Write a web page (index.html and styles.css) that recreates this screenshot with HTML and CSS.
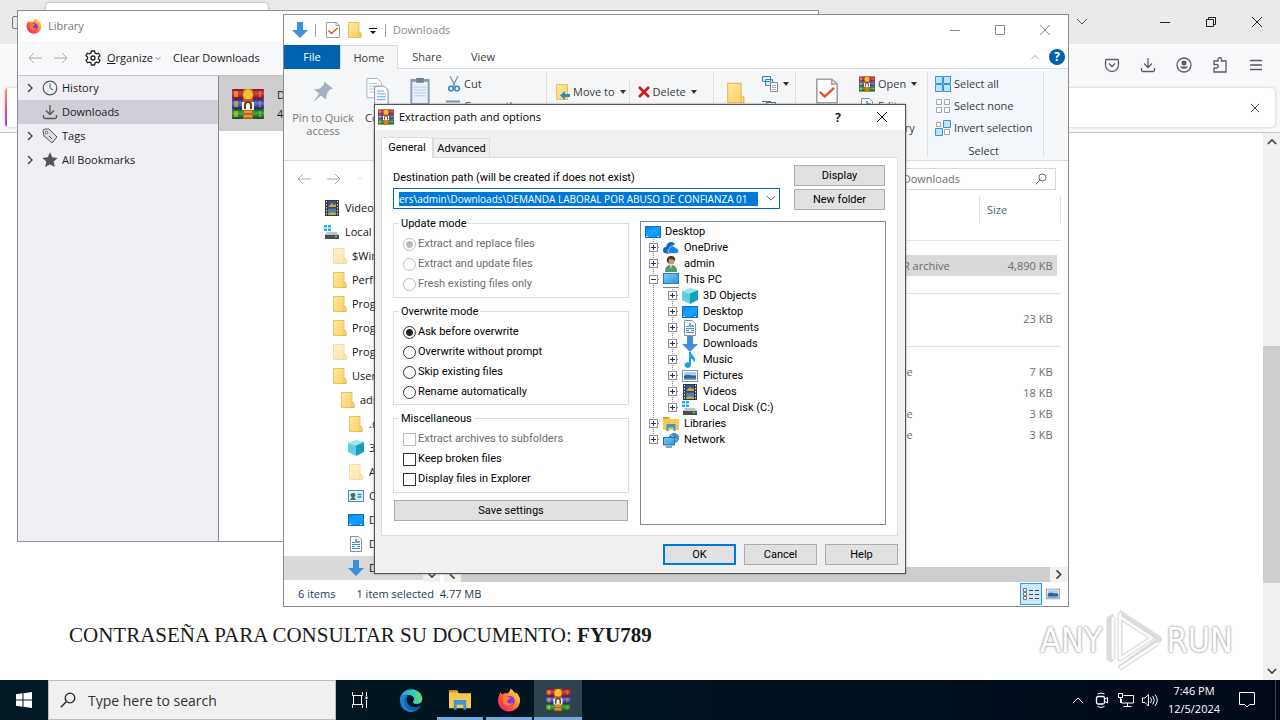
FILE: index.html
```html
<!DOCTYPE html>
<html lang="en">
<head>
<meta charset="utf-8">
<title>Desktop</title>
<link rel="stylesheet" href="styles.css">
</head>
<body>
<svg class="defs" aria-hidden="true">
  <defs>
    <linearGradient id="gRed" x2="0" y2="1"><stop offset="0" stop-color="#7e1620"/><stop offset=".4" stop-color="#e0434a"/><stop offset="1" stop-color="#7c1019"/></linearGradient>
    <linearGradient id="gBlue" x2="0" y2="1"><stop offset="0" stop-color="#262a80"/><stop offset=".4" stop-color="#6c6fd4"/><stop offset="1" stop-color="#22246b"/></linearGradient>
    <linearGradient id="gGreen" x2="0" y2="1"><stop offset="0" stop-color="#0e5a20"/><stop offset=".4" stop-color="#3fae4b"/><stop offset="1" stop-color="#0b4a19"/></linearGradient>
    <linearGradient id="gFolder" x2="1" y2="1"><stop offset="0" stop-color="#ffe9a0"/><stop offset="1" stop-color="#f8cf63"/></linearGradient>
    <linearGradient id="gScreen" x2="1" y2="1"><stop offset="0" stop-color="#0a84f0"/><stop offset=".5" stop-color="#19a4ff"/><stop offset="1" stop-color="#0a84f0"/></linearGradient>
    <linearGradient id="gPc" x2="1" y2="1"><stop offset="0" stop-color="#7fd0fb"/><stop offset="1" stop-color="#2a94dd"/></linearGradient>
    <linearGradient id="gFox" x1="1" x2="0" y2="1"><stop offset="0" stop-color="#fff24a"/><stop offset=".35" stop-color="#ffa02a"/><stop offset=".65" stop-color="#ff4a3f"/><stop offset="1" stop-color="#e61b86"/></linearGradient>
    <linearGradient id="gEdge" x2="1" y2="0"><stop offset="0" stop-color="#1b9de0"/><stop offset=".6" stop-color="#38c8c0"/><stop offset="1" stop-color="#6be05a"/></linearGradient>
    <linearGradient id="gEdge2" x2="1" y2="1"><stop offset="0" stop-color="#1b74d0"/><stop offset="1" stop-color="#0d4c9c"/></linearGradient>
  </defs>
  <symbol id="winrar" viewBox="0 0 32 32">
    <rect x="0" y="1" width="32" height="10" rx="1" fill="url(#gRed)"/><rect x="0" y="11" width="32" height="10" rx="1" fill="url(#gBlue)"/><rect x="0" y="21" width="32" height="10" rx="1" fill="url(#gGreen)"/>
    <path d="M3 3v6M5 3v6M3 13v6M5 13v6M3 23v6M5 23v6" stroke="#e9c13c" stroke-width="1.2"/>
    <path d="M28 3v6M28 13v6M28 23v6" stroke="#d5a93a" stroke-width="1"/>
    <rect x="11" y="1" width="10" height="30" fill="#b8631e"/><path d="M12 5h8M12 9h8M12 24h8M12 28h8" stroke="#e89b3c" stroke-width="2"/>
    <path d="M11 8c0-9 10-9 10 0l-2 3h-6z" fill="#f6c330"/><rect x="10" y="14" width="12" height="8" fill="#f7f4ee"/><path d="M13 21v-4a3 3 0 0 1 6 0v4" fill="none" stroke="#6a3b1c" stroke-width="2"/>
  </symbol>
  <symbol id="folder" viewBox="0 0 14 16"><path d="M.5.5h10.5v10l2 1v4H.5z" fill="url(#gFolder)" stroke="#e9c05c"/><path d="M11 15.500v-3.500q0-1.500 1-1.500t1 1.500v3.500z" fill="#fbe08a" stroke="#dcae45" stroke-width=".7"/></symbol>
  <symbol id="arrow" viewBox="0 0 16 16"><path d="M5 0h6v8h5l-8 8-8-8h5z" fill="#3c8fdb"/></symbol>
  <symbol id="desktop" viewBox="0 0 16 12"><rect width="16" height="12" fill="#0a6fce"/><rect x="1" y="1" width="14" height="10" fill="url(#gScreen)"/><path d="M1 10.500h2M12 10.500h2" stroke="#bfe3ff"/></symbol>
  <symbol id="doc" viewBox="0 0 16 16"><path d="M2.500.5h8l3 3v12h-11z" fill="#fff" stroke="#8a9299"/><path d="M4 6.500h3M4 8.500h8M4 10.500h3M9 10.500h3M4 12.500h8" stroke="#3c8fc9"/><path d="M8 3v3h4" fill="none" stroke="#3c8fc9" stroke-width="1.500"/></symbol>
  <symbol id="video" viewBox="0 0 16 16"><rect x="1" width="14" height="16" fill="#33383d"/><rect x="4" y="1" width="8" height="6.500" fill="#35568c"/><rect x="4" y="8.500" width="8" height="6.500" fill="#4b7fb8"/><path d="M4 7l4-4 2 2 2-1v3zM4 14l3-2 5 1v2H4z" fill="#cfa23c"/><path d="M2.500 1v14M13.500 1v14" stroke="#dfe3e6" stroke-dasharray="1.500 1.500"/></symbol>
  <symbol id="disk" viewBox="0 0 16 16"><path d="M0 1h3v2.500H0zM4 1h3v2.500H4zM0 4.500h3V7H0zM4 4.500h3V7H4z" fill="#22b1ea"/><path d="M3 8h10l2 3H1z" fill="#c2c6c9"/><path d="M1 11h14v4H1z" fill="#4a4f53"/><path d="M11 12.500h2" stroke="#5de06a" stroke-width="1.500"/></symbol>
  <symbol id="cube" viewBox="0 0 16 16"><path d="M0 3l8-3 8 2-8 3.500z" fill="#9be5ee"/><path d="M0 3l8 2.500V16l-8-4z" fill="#5fd0df"/><path d="M8 5.500L16 2v10l-8 4z" fill="#14a0bd"/></symbol>
  <symbol id="card" viewBox="0 0 16 12"><rect x=".5" y=".5" width="15" height="11" fill="#d8effc" stroke="#5a8fb5"/><path d="M5 3a2 2 0 0 1 1 4l2 3H2l2-3a2 2 0 0 1 1-4z" fill="#3d7560"/><path d="M9.500 4.500h4M9.500 7h4" stroke="#2d86c4" stroke-width="1.500"/></symbol>
  <symbol id="music" viewBox="0 0 16 16"><path d="M7 0h2c0 3 4 4 4 8 0 1-.5 2-1 2.500C12 8 10 7 9 6.500V13a3.200 2.800 0 1 1-2-2.500z" fill="#16a0ee"/></symbol>
  <symbol id="picture" viewBox="0 0 16 12"><rect x=".5" y=".5" width="15" height="11" fill="#fff" stroke="#8d969e"/><rect x="2" y="2" width="12" height="8" fill="#9fd2f5"/><path d="M2 6c4-3 6 0 12-.5V10H2z" fill="#31618e"/><path d="M2 8.500h12V10H2z" fill="#79aede"/></symbol>
  <symbol id="cloud" viewBox="0 0 16 12"><path d="M0 8a3 3 0 0 1 3-3C4 0 9-1.500 12 2L6 7l2 4.500H3A3.200 3.200 0 0 1 0 8z" fill="#0f6cc4"/><path d="M7 11.500a2.700 2.700 0 0 1-.500-5C7 3.500 11.500 3 12.500 6a2.800 2.800 0 0 1 1 5.500z" fill="#1b86e0" stroke="#fff" stroke-width=".6"/></symbol>
  <symbol id="user" viewBox="0 0 16 16"><path d="M2 16c0-5 2-7 6-7s6 2 6 7z" fill="#4f9a6b"/><circle cx="8" cy="5" r="3.600" fill="#c89872"/><path d="M4 6c-2-8 10-8 8-1-1-2-4-1-5-2.500C6 4 5.500 5 5.500 7z" fill="#4c392e"/><path d="M7 9l1 4 1-4z" fill="#e8efe9"/></symbol>
  <symbol id="pc" viewBox="0 0 16 16"><rect x=".5" y="1.500" width="15" height="10" fill="url(#gPc)" stroke="#2a78b0"/><path d="M0 15.500h16" stroke="#6f8595"/></symbol>
  <symbol id="library" viewBox="0 0 16 16"><path d="M0 1h6l1 2h9v11H0z" fill="#f8c94c"/><path d="M0 1h6l1 1.500H0z" fill="#d99b22"/><path d="M3.500 15V8h9v7h-2v-3.500h-5V15z" fill="#3d94d8"/></symbol>
  <symbol id="network" viewBox="0 0 16 16"><circle cx="11" cy="6" r="5" fill="#3b8fc4"/><path d="M8 3c2 1 3 4 6 5" stroke="#9bd7f2" fill="none"/><rect x=".5" y="5.500" width="11" height="7.500" fill="url(#gPc)" stroke="#2a6f9f"/><path d="M3 15h6" stroke="#4292c0" stroke-width="1.500"/></symbol>
  <symbol id="firefox" viewBox="0 0 24 24"><path d="M12 23.500A11 11 0 0 1 1.500 9C2.500 6 3 5 4 4c0 1 .3 2 1 2.500C7 5 9 5 10 5.500c2-1 3-2 3.500-5 3 2 4 4 5 5l.8-1c3 3 4.200 6 3.700 9.500A11 11 0 0 1 12 23.500z" fill="url(#gFox)"/><circle cx="12.500" cy="13" r="5.300" fill="#7a3be0"/><path d="M6 9c3-2 6 0 8 1-2 .5-2 2-4 2.500 0 3 4 4 6.500 2-1.500 4-8 5-10.500 0-.8-2-.6-4 0-5.500z" fill="#ff7a2e"/></symbol>
  <symbol id="edge" viewBox="0 0 24 24"><path d="M1 10C3 1 15-2 21 5c4 5 2.500 11-3 11-3 0-4-1-4-2 0-.8 1-1 1-3 0-3-3-4-5-4-5 0-9 3-9 6z" fill="url(#gEdge)"/><path d="M1 12c0-5 5-6 8-4-4 2-5 9 0 12 4 3 9 2 13-2-3 5-9 7-13 5.500C4 22 1 18 1 12z" fill="#1a82d8"/><path d="M9 8c-2 2-2 7 2 10 4 2 8 1 11-.5-5 7.500-13 5.500-15 1.500-2.500-5-.5-9 2-11z" fill="url(#gEdge2)"/></symbol>
  <symbol id="back" viewBox="0 0 14 12"><path d="M14 6H1M6 1L1 6l5 5" fill="none" stroke="currentColor"/></symbol>
  <symbol id="fwd" viewBox="0 0 14 12"><path d="M0 6h13M8 1l5 5-5 5" fill="none" stroke="currentColor"/></symbol>
  <symbol id="down" viewBox="0 0 12 8"><path d="M1 1l5 5 5-5" fill="none" stroke="currentColor"/></symbol>
  <symbol id="up" viewBox="0 0 12 8"><path d="M1 7l5-5 5 5" fill="none" stroke="currentColor"/></symbol>
  <symbol id="right" viewBox="0 0 8 12"><path d="M2 2l4 4-4 4" fill="none" stroke="currentColor" stroke-width="1.400"/></symbol>
  <symbol id="x" viewBox="0 0 12 12"><path d="M1 1l10 10M11 1L1 11" fill="none" stroke="currentColor"/></symbol>
  <symbol id="max" viewBox="0 0 12 12"><path d="M1.500 1.500h9v9h-9z" fill="none" stroke="currentColor"/></symbol>
  <symbol id="min" viewBox="0 0 12 12"><path d="M1 6.500h10" stroke="currentColor"/></symbol>
  <symbol id="restore" viewBox="0 0 12 12"><path d="M1.500 3.500h7v7h-7zM3.500 3.500v-2h7v7h-2" fill="none" stroke="currentColor"/></symbol>
  <symbol id="save" viewBox="0 0 16 16"><path d="M8 1v9M4 6.500l4 4 4-4M1.500 11v2a1.500 1.500 0 0 0 1.500 1.500h10a1.500 1.500 0 0 0 1.500-1.500v-2" fill="none" stroke="currentColor" stroke-width="1.300"/></symbol>
  <symbol id="lens" viewBox="0 0 16 16"><circle cx="10" cy="6" r="4.800" fill="none" stroke="currentColor" stroke-width="1.300"/><path d="M6.500 9.500L.8 15.200" stroke="currentColor" stroke-width="1.300"/></symbol>
  <symbol id="check" viewBox="0 0 14 16"><path d="M.5.5h9.500l3.500 3v12H.5z" fill="#fff" stroke="#a0a0a0"/><path d="M10 .5v3h3.500" fill="none" stroke="#a0a0a0"/><path d="M2.500 8.500l3 3 6-5.500" fill="none" stroke="#e0532c" stroke-width="1.500"/></symbol>
  <symbol id="copy" viewBox="0 0 24 28"><path d="M.5.5h11l4 4v16H.5z" fill="#fff" stroke="#a7b0ba"/><path d="M3 5.500h8M3 8.500h10M3 11.500h10M3 14.500h5" stroke="#9cc0e8"/><path d="M8.500 8.500h10l4 4v15h-14z" fill="#fff" stroke="#7f8fa0"/><path d="M11 13.500h7M11 16.500h9M11 19.500h9M11 22.500h9" stroke="#5a9be0"/></symbol>
  <symbol id="paste" viewBox="0 0 20 28"><rect y="2" width="20" height="26" fill="#8e9db4"/><rect x="2" y="5" width="16" height="22" fill="#eaf0f9"/><path d="M6 1h8v5H6z" fill="#6f7f96"/><path d="M4 10.500h12M4 13.500h12M4 16.500h12M4 19.500h12" stroke="#b9c9e0"/></symbol>
  <symbol id="pin" viewBox="0 0 22 22"><path d="M12 1l9 7-3 1-3 4-1 6-5-4-8 7 6-9-5-4 6-1 4-4z" fill="#a5b2c2"/></symbol>
  <symbol id="cut" viewBox="0 0 12 16"><path d="M2 0l5 10M10 0L5 10" stroke="#8a98a6" stroke-width="1.400"/><circle cx="3" cy="12.500" r="2.300" fill="none" stroke="#2c8bd0" stroke-width="1.600"/><circle cx="9" cy="12.500" r="2.300" fill="none" stroke="#2c8bd0" stroke-width="1.600"/></symbol>
  <symbol id="move" viewBox="0 0 14 16"><path d="M.5.5h11v15H.5z" fill="url(#gFolder)" stroke="#e9c05c"/><path d="M14 10H9V7l-5 4.500L9 16v-3h5z" fill="#3486cf"/></symbol>
  <symbol id="copies" viewBox="0 0 16 16"><path d="M.5.5h8v5h-8zM3.500 3.500h7v6h-7z" fill="#dceefa" stroke="#3a86a8"/><path d="M8.500 6.500h7v9h-7z" fill="#fff" stroke="#858d94"/><path d="M10 9.500h4M10 11.500h4M10 13.500h4" stroke="#a5adb4"/></symbol>
</svg>

<main class="desktop">
  <section class="browser" aria-label="Browser">
    <div class="tabstrip">
      <span class="view-icon"></span><span class="tab"></span>
      <div class="wincontrols">
        <svg class="s12 tablist"><use href="#down"/></svg>
        <svg class="s12"><use href="#min"/></svg><svg class="s12"><use href="#restore"/></svg><svg class="s12"><use href="#x"/></svg>
      </div>
    </div>
    <div class="toolbar">
      <svg class="s16" viewBox="0 0 16 16"><path d="M2.500 2.500h11q1 0 1 1V8a6.500 6.500 0 0 1-13 0V3.500q0-1 1-1zM5 6.500l3 3 3-3" fill="none" stroke="currentColor" stroke-width="1.300"/></svg>
      <svg class="s16"><use href="#save"/></svg>
      <svg class="s16" viewBox="0 0 16 16"><circle cx="8" cy="8" r="7" fill="none" stroke="currentColor" stroke-width="1.300"/><circle cx="8" cy="6" r="2.500" fill="currentColor"/><path d="M3.800 9.500h8.400a5 5 0 0 1-8.400 0z" fill="currentColor"/></svg>
      <svg class="s16" viewBox="0 0 16 16"><path d="M2 15V11h2.500a1.700 1.700 0 0 0 0-3.500H2V4h4V2.500a1.700 1.700 0 0 1 3.500 0V4H14v11z" fill="none" stroke="currentColor" stroke-width="1.300"/></svg>
      <svg class="s16" viewBox="0 0 16 16"><path d="M2 3.500h12M2 8h12M2 12.500h12" stroke="currentColor" stroke-width="1.300"/></svg>
    </div>
    <div class="notice"><div class="notice-box"><svg class="s10"><use href="#x"/></svg></div></div>
    <div class="viewport">
      <article class="page"><p>CONTRASEÑA PARA CONSULTAR SU DOCUMENTO: <strong>FYU789</strong></p></article>
      <div class="vscroll"><svg class="arrow"><use href="#up"/></svg><span class="thumb"></span><svg class="arrow"><use href="#down"/></svg></div>
    </div>
  </section>

  <section class="window library" aria-label="Library">
    <header class="lib-title"><svg class="s16"><use href="#firefox"/></svg>Library</header>
    <div class="lib-tools">
      <svg class="nav"><use href="#back"/></svg><svg class="nav"><use href="#fwd"/></svg>
      <svg class="s16 gear" viewBox="0 0 16 16"><path d="M6.500 1h3l.5 2 1.500.8 2-.6 1.500 2.600L13.500 7v2l1.500 1.300-1.500 2.500-2-.6-1.500.8-.5 2h-3L6 13l-1.500-.8-2 .6L1 10.200 2.500 9V7L1 5.700l1.500-2.500 2 .6L6 3z" fill="none" stroke="#222" stroke-width="1.300"/><circle cx="8" cy="8" r="2" fill="none" stroke="#222" stroke-width="1.300"/></svg>
      <button class="flat"><span><u>O</u>rganize</span><svg class="tiny"><use href="#down"/></svg></button>
      <button class="flat clear">Clear Downloads</button>
    </div>
    <div class="lib-body">
      <ul class="lib-side">
        <li><svg class="chev"><use href="#right"/></svg><svg class="s16" viewBox="0 0 16 16"><circle cx="8" cy="8" r="6.800" fill="none" stroke="currentColor" stroke-width="1.200"/><path d="M8 3.500V8l3 2" fill="none" stroke="currentColor"/></svg>History</li>
        <li class="on"><span class="chev"></span><svg class="s16"><use href="#save"/></svg>Downloads</li>
        <li><svg class="chev"><use href="#right"/></svg><svg class="s16" viewBox="0 0 16 16"><path d="M1 3q0-2 2-2h4l8 8-5 6-8-7z" fill="#dcdce0" stroke="currentColor"/><circle cx="4.500" cy="4.500" r="1.200" fill="#fff" stroke="currentColor"/><path d="M7 8l3 3" stroke="currentColor"/></svg>Tags</li>
        <li><svg class="chev"><use href="#right"/></svg><svg class="s16" viewBox="0 0 16 16"><path d="M8 .3l2.300 5 5.400.6-4 3.700 1.100 5.500L8 12.400l-4.800 2.700 1.100-5.500-4-3.700 5.400-.6z" fill="currentColor"/></svg>All Bookmarks</li>
      </ul>
      <div class="lib-list"><div class="lib-item"><svg class="s32"><use href="#winrar"/></svg><div>D<br>4</div></div></div>
    </div>
  </section>

  <section class="window explorer" aria-label="Downloads">
    <header class="ex-title">
      <svg class="s16"><use href="#arrow"/></svg><i class="bar"></i><svg class="f16 qcheck"><use href="#check"/></svg><svg class="f16 qfolder"><use href="#folder"/></svg>
      <svg class="qdrop" viewBox="0 0 8 8"><path d="M0 1.500h8" stroke="#111"/><path d="M1 4h6L4 7z" fill="#111"/></svg><i class="bar"></i><span class="ex-name">Downloads</span>
      <div class="ex-controls"><svg class="s12"><use href="#min"/></svg><svg class="s12"><use href="#max"/></svg><svg class="s12"><use href="#x"/></svg></div>
    </header>
    <nav class="ex-tabs"><button class="file">File</button><button class="home">Home</button><button>Share</button><button>View</button>
      <div class="ex-help"><svg class="ucar"><use href="#up"/></svg><button class="help">?</button></div></nav>
    <div class="ribbon">
      <div class="group clip">
        <button class="big pinbtn"><svg class="pin"><use href="#pin"/></svg><span>Pin to Quick<br>access</span></button>
        <button class="big"><svg class="copy"><use href="#copy"/></svg><span>Copy</span></button>
        <button class="big paste"><svg class="copy"><use href="#paste"/></svg></button>
        <div class="stack"><button><svg class="s16"><use href="#cut"/></svg>Cut</button><button><svg class="s16" viewBox="0 0 16 16"><path d="M0 3.500h14" stroke="#7895b0" stroke-width="2"/></svg>Copy path</button></div>
      </div>
      <div class="group org"><button><svg class="f16"><use href="#move"/></svg>Move to<i class="tri"></i></button><i class="split"></i><button class="delete"><svg class="s12" viewBox="0 0 12 12"><path d="M1 1l10 10M11 1L1 11" stroke="#d3161b" stroke-width="2.600"/></svg>Delete<i class="tri"></i></button></div>
      <div class="group new"><svg class="newf"><use href="#folder"/></svg><div class="stack"><button><svg class="s16"><use href="#copies"/></svg><i class="tri"></i></button><button><svg class="s16" viewBox="0 0 16 16"><path d="M4.500 4.500h9v8h-9zM0 3.500h9M2 6.500h5" fill="none" stroke="#4a6f90"/></svg><i class="tri"></i></button></div></div>
      <div class="group open"><svg class="prop"><use href="#check"/></svg><div class="stack"><button><svg class="s16"><use href="#winrar"/></svg>Open<i class="tri"></i></button><button><svg class="s16"><use href="#doc"/></svg>Edit</button><button><svg class="s16"><use href="#doc"/></svg>History</button></div></div>
      <div class="group select"><div class="stack">
        <button><svg class="s16" viewBox="0 0 16 16"><path d="M.5.5h7v7h-7zM8.500.5h7v7h-7zM.5 8.500h7v7h-7zM8.500 8.500h7v7h-7z" fill="#bfe2fb" stroke="#3b94d6"/></svg>Select all</button>
        <button><svg class="s16" viewBox="0 0 16 16"><path d="M1.500 1.500h5v5h-5zM9.500 1.500h5v5h-5zM1.500 9.500h5v5h-5zM9.500 9.500h5v5h-5z" fill="#fff" stroke="#a5a5a5"/></svg>Select none</button>
        <button><svg class="s16" viewBox="0 0 16 16"><path d="M1.500 2.500h4v4h-4zM9.500 9.500h5v5h-5z" fill="#fff" stroke="#a5a5a5"/><path d="M8.500.5h7v7h-7zM.5 8.500h7v7h-7z" fill="#bfe2fb" stroke="#3b94d6"/></svg>Invert selection</button>
        <span class="glabel">Select</span></div></div>
    </div>
    <div class="address"><svg class="nav"><use href="#back"/></svg><svg class="nav"><use href="#fwd"/></svg><svg class="tiny"><use href="#down"/></svg><svg class="tiny dark"><use href="#up"/></svg>
      <div class="searchbox"><input aria-label="Search" placeholder="Search Downloads"><svg class="s12"><use href="#lens"/></svg></div></div>
    <div class="ex-body">
      <div class="navpane">
        <ul>
          <li class="l1"><svg class="s16"><use href="#video"/></svg>Videos</li>
          <li class="l1"><svg class="s16"><use href="#disk"/></svg>Local Disk (C:)</li>
          <li class="l2 pale"><svg class="f16"><use href="#folder"/></svg>$WinREAgent</li>
          <li class="l2"><svg class="f16"><use href="#folder"/></svg>PerfLogs</li>
          <li class="l2"><svg class="f16"><use href="#folder"/></svg>Program Files</li>
          <li class="l2"><svg class="f16"><use href="#folder"/></svg>Program Files</li>
          <li class="l2 pale"><svg class="f16"><use href="#folder"/></svg>ProgramData</li>
          <li class="l2"><svg class="f16"><use href="#folder"/></svg>Users</li>
          <li class="l3"><svg class="f16"><use href="#folder"/></svg>admin</li>
          <li class="l4"><svg class="f16"><use href="#folder"/></svg>.ms</li>
          <li class="l4"><svg class="s16"><use href="#cube"/></svg>3D Objects</li>
          <li class="l4 pale"><svg class="f16"><use href="#folder"/></svg>AppData</li>
          <li class="l4"><svg class="s16"><use href="#card"/></svg>Contacts</li>
          <li class="l4"><svg class="s16"><use href="#desktop"/></svg>Desktop</li>
          <li class="l4"><svg class="s16"><use href="#doc"/></svg>Documents</li>
          <li class="l4 on"><svg class="s16"><use href="#arrow"/></svg>Downloads</li>
        </ul>
        <div class="navscroll"><svg class="arrow"><use href="#down"/></svg></div>
      </div>
      <div class="filepane">
        <table>
          <colgroup><col><col class="ctype"><col class="csize"><col class="cend"></colgroup>
          <thead><tr><th></th><th></th><th>Size</th><th></th></tr></thead>
          <tbody><tr class="sep"><td colspan="4"><hr></td></tr><tr class="on"><td></td><td>WinRAR archive</td><td>4,890 KB</td><td></td></tr></tbody>
          <tbody><tr class="sep"><td colspan="4"><hr></td></tr><tr><td></td><td></td><td>23 KB</td><td></td></tr></tbody>
          <tbody><tr class="sep"><td colspan="4"><hr></td></tr><tr><td></td><td>PNG File</td><td>7 KB</td><td></td></tr><tr><td></td><td></td><td>18 KB</td><td></td></tr><tr><td></td><td>PNG File</td><td>3 KB</td><td></td></tr><tr><td></td><td>PNG File</td><td>3 KB</td><td></td></tr></tbody>
        </table>
        <div class="hscroll"><svg class="arrow left"><use href="#down"/></svg><span class="thumb"></span><svg class="arrow rt"><use href="#down"/></svg></div>
      </div>
    </div>
    <footer class="status"><span>6 items</span><span>1 item selected&nbsp; 4.77 MB</span>
      <button class="viewmode on" aria-label="Details"><svg class="s16" viewBox="0 0 16 16"><path d="M.5 2.500h3v3h-3zM.5 6.500h3v3h-3zM.5 10.500h3v3h-3z" fill="#fff" stroke="#777"/><path d="M6 4.500h4M12 4.500h4M6 8.500h4M12 8.500h4M6 12.500h4M12 12.500h4" stroke="#444"/></svg></button>
      <button class="viewmode" aria-label="Large icons"><svg class="s14"><use href="#picture"/></svg></button></footer>
  </section>

  <section class="window dialog" role="dialog" aria-label="Extraction path and options">
    <header class="dg-title"><svg class="s16"><use href="#winrar"/></svg><span>Extraction path and options</span><b>?</b><svg class="s12"><use href="#x"/></svg></header>
    <form class="dg-body">
      <div class="dg-tabs" role="tablist"><button type="button" role="tab" class="on">General</button><button type="button" role="tab">Advanced</button></div>
      <div class="panel">
        <div class="toprow">
          <div class="dest"><label for="path">Destination path (will be created if does not exist)</label>
            <div class="combo"><input id="path" value="ers\admin\Downloads\DEMANDA LABORAL POR ABUSO DE CONFIANZA 01"><svg class="cdrop"><use href="#down"/></svg></div></div>
          <div class="sidebtns"><button type="button">Display</button><button type="button">New folder</button></div>
        </div>
        <div class="cols">
          <div class="leftcol">
            <fieldset disabled><legend>Update mode</legend>
              <label><input type="radio" name="u" checked>Extract and replace files</label><label><input type="radio" name="u">Extract and update files</label><label><input type="radio" name="u">Fresh existing files only</label></fieldset>
            <fieldset class="four"><legend>Overwrite mode</legend>
              <label><input type="radio" name="o" checked>Ask before overwrite</label><label><input type="radio" name="o">Overwrite without prompt</label><label><input type="radio" name="o">Skip existing files</label><label><input type="radio" name="o">Rename automatically</label></fieldset>
            <fieldset><legend>Miscellaneous</legend>
              <label class="off"><input type="checkbox" disabled>Extract archives to subfolders</label><label><input type="checkbox">Keep broken files</label><label><input type="checkbox">Display files in Explorer</label></fieldset>
            <button type="button" class="savebtn">Save settings</button>
          </div>
          <div class="tree">
            <div class="node root"><svg class="s16"><use href="#desktop"/></svg>Desktop</div>
            <ul>
              <li><div class="node"><i class="pm"></i><svg class="s16"><use href="#cloud"/></svg>OneDrive</div></li>
              <li><div class="node"><i class="pm"></i><svg class="s16"><use href="#user"/></svg>admin</div></li>
              <li><div class="node"><i class="pm minus"></i><svg class="s16"><use href="#pc"/></svg>This PC</div>
                <ul>
                  <li><div class="node"><i class="pm"></i><svg class="s16"><use href="#cube"/></svg>3D Objects</div></li>
                  <li><div class="node"><i class="pm"></i><svg class="s16"><use href="#desktop"/></svg>Desktop</div></li>
                  <li><div class="node"><i class="pm"></i><svg class="s16"><use href="#doc"/></svg>Documents</div></li>
                  <li><div class="node"><i class="pm"></i><svg class="s16"><use href="#arrow"/></svg>Downloads</div></li>
                  <li><div class="node"><i class="pm"></i><svg class="s16"><use href="#music"/></svg>Music</div></li>
                  <li><div class="node"><i class="pm"></i><svg class="s16"><use href="#picture"/></svg>Pictures</div></li>
                  <li><div class="node"><i class="pm"></i><svg class="s16"><use href="#video"/></svg>Videos</div></li>
                  <li><div class="node"><i class="pm"></i><svg class="s16"><use href="#disk"/></svg>Local Disk (C:)</div></li>
                </ul></li>
              <li><div class="node"><i class="pm"></i><svg class="s16"><use href="#library"/></svg>Libraries</div></li>
              <li><div class="node"><i class="pm"></i><svg class="s16"><use href="#network"/></svg>Network</div></li>
            </ul>
          </div>
        </div>
      </div>
      <div class="actions"><button type="button" class="ok">OK</button><button type="button">Cancel</button><button type="button">Help</button></div>
    </form>
  </section>

  <div class="mark"><span>ANY</span>
    <svg viewBox="0 0 56 64"><g fill="none" stroke-linejoin="round"><path d="M7 53L3 50V11l5-3M13 4l41 27-41 29" stroke="#dcdcdc" stroke-width="5"/><path d="M14 5v46l32-21L14 9M7 51V9M14 60l38-25" stroke="#d4d4d4" stroke-width="5"/><path d="M14 5v46l32-21L14 9M7 51V9M14 60l38-25" stroke="#fafafa" stroke-width="3"/></g></svg>
    <span>RUN</span></div>
</main>

<footer class="taskbar">
  <button class="start" aria-label="Start"><svg class="s16" viewBox="0 0 16 16"><path d="M0 2.200L6.500 1.300v6.200H0zM7.500 1.200L16 0v7.500H7.500zM0 8.500h6.500v6.200L0 13.800zM7.500 8.500H16V16l-8.500-1.200z" fill="#fff"/></svg></button>
  <div class="search"><svg class="s16"><use href="#lens"/></svg><input aria-label="Search" placeholder="Type here to search"></div>
  <button class="app" aria-label="Task view"><svg class="s16" viewBox="0 0 16 16"><path d="M.5 0v3.500h10V0M.5 16v-3.500h10V16M1.500 4v8M9.500 4v8M14.500 0v4M14.500 8v8" fill="none" stroke="#fff"/><path d="M13.500 4.500h2v2.500h-2z" fill="#fff"/></svg></button>
  <button class="app wide" aria-label="Edge"><svg class="s24"><use href="#edge"/></svg></button>
  <button class="app run" aria-label="File Explorer"><svg class="s22"><use href="#library"/></svg></button>
  <button class="app run" aria-label="Firefox"><svg class="s24"><use href="#firefox"/></svg></button>
  <button class="app run active" aria-label="WinRAR"><svg class="s24"><use href="#winrar"/></svg></button>
  <div class="tray">
    <svg class="s12"><use href="#up"/></svg>
    <svg class="s16" viewBox="0 0 16 16"><rect x="2.500" y="4.500" width="8" height="7.500" rx="1.500" fill="none" stroke="#fff" stroke-width="1.300"/><path d="M11 7l2.500-1.500v5.500L11 9.500M3.500 2Q7 0 10.500 2M3.500 14.500q3.500 2 7 0" fill="none" stroke="#fff"/></svg>
    <svg class="s16" viewBox="0 0 16 16"><path d="M5.500 3.500h10v7.500h-12V7M9.500 11v3M5.500 14.500h8M.5 1.500h4v4h-4zM2.500 5.500V11" fill="none" stroke="#fff"/></svg>
    <svg class="s16" viewBox="0 0 16 16"><path d="M.5 6v4.500h2.500L6.500 14V2.500L3 6zM8.500 5.500q2 2.700 0 5.500M10.800 4q3 4.200 0 8.500M13 2.500q4.500 5.700 0 11.500" fill="none" stroke="#fff"/></svg>
    <div class="clock">7:46 PM<br>12/5/2024</div>
    <svg class="s16 note" viewBox="0 0 16 16"><path d="M.5.5h15v12h-5L8 15l-2.500-2.500h-5z" fill="none" stroke="#fff"/></svg>
    <i class="peek"></i>
  </div>
</footer>
</body>
</html>
```
FILE: styles.css
```css
* { box-sizing: border-box; }
body { margin: 0; height: 100vh; display: flex; flex-direction: column; overflow: hidden; font: 11px/16px "Open Sans", "Noto Sans", sans-serif; color: #1a1a1a; background: #fff; }
ul { list-style: none; margin: 0; padding: 0; }
button { font: inherit; color: inherit; background: none; border: 0; padding: 0; margin: 0; }
input { font: inherit; margin: 0; min-width: 0; }
svg { display: block; flex: none; }
.defs { position: absolute; width: 0; height: 0; }
.s10 { width: 10px; height: 10px; }
.s12 { width: 12px; height: 12px; }
.s14 { width: 14px; height: 12px; }
.s16 { width: 16px; height: 16px; }
.s22 { width: 22px; height: 22px; }
.s24 { width: 24px; height: 24px; }
.s32 { width: 32px; height: 32px; }
.f16 { width: 14px; height: 16px; }
.tiny { width: 6px; height: 5px; }
.nav { width: 14px; height: 12px; color: #a9a9ad; }

.desktop { flex: 1; position: relative; min-height: 0; overflow: hidden; }
.window { position: absolute; display: flex; flex-direction: column; overflow: hidden; background: #fff; }

/* browser */
.browser { height: 100%; display: flex; flex-direction: column; }
.tabstrip { height: 44px; flex: none; background: #eaeaed; display: flex; align-items: center; color: #222; }
.view-icon { width: 12px; height: 13px; margin-left: 12px; border: 1px solid #77777c; border-radius: 2px; }
.tab { width: 222px; height: 38px; margin-left: 22px; background: #fff; border-radius: 4px; box-shadow: 0 0 3px #999; }
.wincontrols { margin-left: auto; display: flex; gap: 34px; padding-right: 17px; }
.tablist { height: 8px; margin: 2px 37px 0 0; color: #555; }
.toolbar { height: 42px; flex: none; background: #f9f9fb; display: flex; align-items: center; justify-content: flex-end; gap: 20px; padding-right: 16px; color: #5b5b66; }
.notice { height: 47px; flex: none; padding: 2px 5px 5px; background: #f9f9fb; border-bottom: 1px solid #c6c6cb; }
.notice-box { height: 39px; background: linear-gradient(#ff9a5a, #e0508a 50%, #8a4bd0) left / 2px 100% no-repeat #fff; border-radius: 4px; box-shadow: 0 0 3px #bbb; display: flex; align-items: center; justify-content: flex-end; padding-right: 15px; }
.viewport { flex: 1; display: flex; min-height: 0; }
.page { flex: 1; display: flex; flex-direction: column; justify-content: flex-end; padding: 0 69px 33px; font: 21px/24px "Liberation Serif", serif; }
.page p { margin: 0; }
.vscroll { width: 17px; background: #f0f0f0; display: flex; flex-direction: column; align-items: center; padding: 5px 0; }
.vscroll .thumb { align-self: stretch; height: 237px; margin: 201px 0 auto; background: #cdcdcd; }
.arrow { width: 10px; height: 7px; color: #444; stroke-width: 2px; }

/* library */
.library { left: 17px; top: 10px; width: 802px; height: 532px; border: 1px solid #8f8f94; }
.lib-title { height: 30px; flex: none; display: flex; align-items: center; gap: 6px; padding-left: 8px; color: #777; }
.lib-tools { height: 34px; flex: none; background: #f9f9fb; display: flex; align-items: center; padding-left: 10px; gap: 12px; }
.gear { margin: 0 -6px 0 5px; }
.flat { display: flex; align-items: center; gap: 2px; }
.lib-body { flex: 1; display: flex; border-top: 1px solid #c8c8cc; }
.lib-side { width: 201px; background: #f0f0f4; border-right: 1px solid #88888c; }
.lib-side li { height: 24px; display: flex; align-items: center; gap: 4px; padding-left: 8px; }
.lib-side .s16 { color: #55555b; }
.lib-side .on { background: #cfcfd8; }
.chev { width: 8px; height: 12px; margin-right: 4px; color: #444; }
.lib-list { flex: 1; }
.lib-item { height: 55px; background: #cdcdcd; display: flex; align-items: center; gap: 13px; padding-left: 13px; line-height: 19px; }

/* explorer */
.explorer { left: 283px; top: 14px; width: 786px; height: 593px; border: 1px solid #8c8c8c; }
.ex-title { height: 30px; flex: none; display: flex; align-items: center; padding-left: 8px; color: #8a8a8a; }
.bar { width: 1px; height: 13px; background: #a0a0a0; margin: 0 7px; }
.qcheck { margin: 0 8px 0 3px; }
.qdrop { width: 8px; height: 8px; margin: 2px 4px 0 7px; }
.ex-title .qdrop + .bar { margin: 0 7px 0 4px; }
.ex-controls { margin-left: auto; display: flex; gap: 33px; padding-right: 17px; }
.ex-tabs { height: 24px; flex: none; display: flex; border-bottom: 1px solid #dadbdc; }
.ex-tabs > button { width: 56px; height: 24px; color: #3b3b3b; }
.ex-tabs > .file { background: #0063b1; color: #fff; }
.ex-tabs > .home { width: 58px; background: #f5f6f7; border: 1px solid #dadbdc; border-bottom: 0; margin-right: 1px; }
.ex-help { margin-left: auto; display: flex; align-items: center; gap: 9px; padding-right: 3px; }
.ucar { width: 10px; height: 6px; color: #888; }
.help { width: 16px; height: 16px; border-radius: 8px; background: #0063b1; color: #fff; font-weight: 700; font-size: 12px; }
.ribbon { height: 92px; flex: none; display: flex; background: #f5f6f7; border-bottom: 1px solid #dadbdc; padding: 3px 0; color: #3b3b3b; }
.ribbon button { display: flex; align-items: center; gap: 3px; white-space: nowrap; }
.group { display: flex; align-items: flex-start; border-right: 1px solid #dfe0e2; }
.ribbon .big { flex-direction: column; gap: 6px; line-height: 13px; padding-top: 6px; }
.ribbon .pinbtn { width: 78px; color: #7a7a7a; }
.pin { width: 22px; height: 27px; }
.copy { width: 24px; height: 27px; }
.ribbon .big:nth-child(2) { width: 32px; }
.ribbon .paste { width: 52px; padding-top: 5px; }
.stack { display: flex; flex-direction: column; padding-top: 1px; }
.stack button { height: 22px; }
.clip { width: 263px; }
.clip .stack button { gap: 2px; }
.org { width: 167px; align-items: center; padding: 6px 0 52px 9px; }
.split { width: 1px; height: 26px; background: #dfe0e2; margin: 0 8px 0 3px; }
.new { width: 82px; }
.newf { width: 18px; height: 26px; margin: 8px 17px 0 13px; }
.prop { width: 22px; height: 30px; margin: 4px 21px 0 20px; }
.open { width: 132px; }
.select { width: 116px; padding-left: 7px; background: #f3f6fa; }
.glabel { line-height: 16px; margin-top: 4px; text-align: center; }
.tri { border: 3px solid transparent; border-top: 4px solid #333; border-bottom: 0; margin-left: 2px; }
.address { height: 35px; flex: none; display: flex; align-items: center; padding: 0 12px 0 13px; gap: 16px; color: #aaa; }
.dark { color: #333; }
.searchbox { margin-left: auto; width: 211px; height: 22px; border: 1px solid #d9d9d9; display: flex; align-items: center; padding: 0 8px 0 19px; color: #666; }
.searchbox input { flex: 1; border: 0; padding: 0; color: #6d6d6d; background: none; }
.searchbox input::placeholder { color: #6d6d6d; }
.ex-body { flex: 1; display: flex; min-height: 0; }
.navpane { width: 156px; display: flex; }
.navpane ul { flex: 1; min-width: 0; }
.navpane li { height: 24px; display: flex; align-items: center; gap: 5px; white-space: nowrap; overflow: hidden; color: #111; }
.l1 { padding-left: 40px; }
.l2 { padding-left: 49px; }
.l3 { padding-left: 57px; }
.l4 { padding-left: 64px; }
.l4 .f16 { margin: 0 1px; }
.pale svg { opacity: .55; }
.navpane .on { background: #d9d9d9; }
.navscroll { width: 17px; background: #f0f0f0; display: flex; align-items: flex-end; justify-content: center; padding-bottom: 3px; }
.filepane { flex: 1; display: flex; flex-direction: column; padding-left: 4px; }
table { table-layout: fixed; width: 617px; border-collapse: collapse; color: #6d6d6d; }
.ctype { width: 110px; }
.csize { width: 77px; }
.cend { width: 4px; }
th { height: 27px; padding: 0 0 0 7px; font-weight: 400; text-align: left; color: #4c607a; }
th:nth-child(2), th:nth-child(4) { border-right: 1px solid #e2e2e2; padding: 0; }
td { height: 21px; padding: 0; white-space: nowrap; }
td:nth-child(3) { text-align: right; padding-right: 4px; }
.sep td { height: 32px; }
hr { border: 0; border-top: 1px solid #e2e2e2; margin: 3px 0 0; }
tr.on td { background: #d9d9d9; }
tr.on td:last-child { background: none; }
.hscroll { height: 15px; margin-top: auto; background: #f0f0f0; display: flex; align-items: center; gap: 4px; padding: 0 4px 0 3px; }
.hscroll .thumb { flex: 1; height: 15px; background: #cdcdcd; }
.left { transform: rotate(90deg); }
.rt { transform: rotate(-90deg); }
.status { height: 24px; flex: none; display: flex; align-items: center; padding-left: 14px; color: #1e395b; }
.status span { margin-right: 21px; }
.viewmode { width: 22px; height: 22px; display: flex; align-items: center; justify-content: center; }
.status .on { margin-left: auto; background: #cce8ff; border: 1px solid #26a0da; }
.viewmode:last-child { margin-right: 4px; }

/* dialog */
.dialog { left: 374px; top: 104px; width: 532px; height: 470px; border: 1px solid #555; background: #f0f0f0; color: #000; box-shadow: 0 0 2px #888; }
.dg-title { height: 25px; flex: none; display: flex; align-items: center; background: #fff; padding: 0 17px 0 3px; line-height: 14px; padding-bottom: 1px; }
.dg-title span { margin-left: 5px; }
.dg-title b { margin: 0 35px 0 auto; font-size: 13px; font-weight: 600; }
.dg-body { flex: 1; display: flex; flex-direction: column; padding: 7px 7px 8px 6px; font: 11px/14px Roboto, sans-serif; }
.dg-tabs { display: flex; align-items: flex-end; }
.dg-tabs button { height: 19px; width: 57px; border: 1px solid #dcdcdc; border-bottom: 0; padding-top: 2px; }
.dg-tabs .on { height: 21px; width: 52px; background: #fff; margin-bottom: -1px; position: relative; padding: 0; }
.panel { background: #fff; border: 1px solid #dcdcdc; padding: 7px 11px 10px 11px; flex: 1; margin-bottom: 8px; display: flex; flex-direction: column; }
.toprow { display: flex; justify-content: space-between; padding-right: 1px; }
.dest { width: 387px; padding-top: 5px; }
.dest label { display: block; height: 18px; line-height: 15px; }
.combo { height: 21px; border: 1px solid #0067c0; display: flex; align-items: center; padding: 0 3px 0 5px; gap: 8px; }
.combo input { flex: 1; height: 14px; border: 0; padding: 0; background: #0078d7; color: #fff; outline: 0; font: 10px/14px "Open Sans", sans-serif; }
.cdrop { width: 10px; height: 7px; color: #444; }
.sidebtns { display: flex; flex-direction: column; gap: 3px; width: 91px; }
.dialog .sidebtns button, .savebtn, .actions button { height: 21px; background: #e1e1e1; border: 1px solid #adadad; padding-top: 1px; }
.cols { flex: 1; display: flex; justify-content: space-between; padding-top: 7px; }
.leftcol { width: 236px; display: flex; flex-direction: column; gap: 7px; }
fieldset { height: 81px; margin: 0; padding: 4px 9px 0; border: 1px solid #dcdcdc; min-width: 0; }
.four { height: 100px; }
legend { padding: 0 2px; margin-left: -4px; height: 13px; line-height: 14px; }
fieldset label { display: flex; align-items: center; gap: 2px; height: 20px; line-height: 16px; }
fieldset:disabled, .off { color: #6d6d6d; }
fieldset:disabled legend { color: #000; }
fieldset input { appearance: none; width: 13px; height: 13px; border: 1px solid #333; background: #fff; }
fieldset input[type=radio] { border-radius: 7px; }
fieldset input:checked { background: radial-gradient(circle, #222 3px, #fff 4px); }
fieldset input:disabled { border-color: #bcbcbc; }
fieldset input:disabled:checked { background: radial-gradient(circle, #bcbcbc 3px, #fff 4px); }
.savebtn { margin: 0 1px; }
.tree { width: 246px; margin-top: 4px; border: 1px solid #828790; padding: 1px 4px; align-self: stretch; }
.tree ul { padding-left: 4px; background: repeating-linear-gradient(#888 0 1px, #fff 1px 2px) 8px 0 / 1px calc(100% - 8px) no-repeat; }
.tree ul ul { margin-left: 15px; }
.node { height: 16px; line-height: 16px; padding-top: 1px; display: flex; align-items: center; white-space: nowrap; }
.node svg { margin-right: 5px; }
.root svg { margin-right: 4px; }
.pm { width: 9px; height: 9px; margin-right: 5px; border: 1px solid #919191; background: linear-gradient(#26306e, #26306e) center / 5px 1px no-repeat, linear-gradient(#26306e, #26306e) center / 1px 5px no-repeat, #fff; box-shadow: 5px 0 0 -4px #888; }
.minus { background: linear-gradient(#26306e, #26306e) center / 5px 1px no-repeat, #fff; }
.actions { display: flex; justify-content: flex-end; gap: 8px; }
.actions button { width: 73px; }
.actions .ok { border: 2px solid #0078d7; padding: 0; }

/* watermark */
.mark { position: absolute; right: 47px; bottom: 8px; display: flex; align-items: center; gap: 4px; font: 34px/40px "DejaVu Sans Condensed", sans-serif; color: #fff; text-shadow: 0 0 2px #999, 0 0 3px #aaa; }
.mark svg { width: 56px; height: 64px; }

/* taskbar */
.taskbar { height: 40px; flex: none; display: flex; background: linear-gradient(90deg, #021a24, #02101f 70%, #020a18); color: #fff; }
.start { width: 48px; display: flex; align-items: center; justify-content: center; }
.search { width: 288px; background: #f0f0f0; border: 1px solid #bdbdbd; display: flex; align-items: center; gap: 12px; padding-left: 11px; color: #222; font-size: 14px; }
.search input { flex: 1; border: 0; padding: 1px 0 0; background: none; }
.search input::placeholder { color: #333; }
.app { width: 48px; display: flex; align-items: center; justify-content: center; border-bottom: 3px solid transparent; padding-top: 2px; }
.wide { margin-left: 3px; margin-right: 1px; }
.run { border-image: linear-gradient(90deg, transparent 4px, #76a9de 4px 44px, transparent 44px) 3; margin-right: 1px; }
.active { background: #2d434d; border-image: none; border-color: #76a9de; }
.tray { margin-left: auto; display: flex; align-items: center; gap: 8px; }
.tray .s12 { height: 8px; margin-right: 2px; }
.clock { text-align: center; line-height: 18px; width: 56px; }
.note { margin-left: 9px; }
.peek { width: 1px; height: 40px; background: #3c4650; margin: 0 4px 0 12px; }
```
